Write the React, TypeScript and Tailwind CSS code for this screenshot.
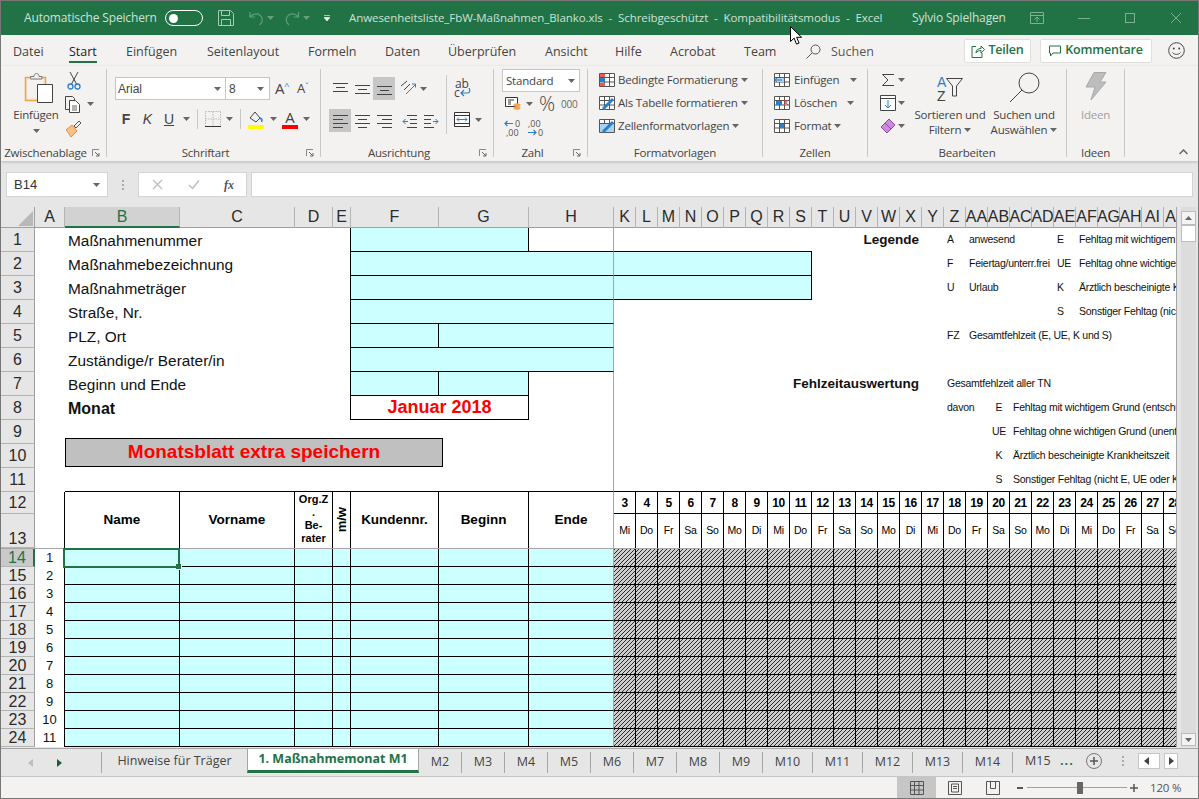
import React from 'react';

const DAYS = ['Mi', 'Do', 'Fr', 'Sa', 'So', 'Mo', 'Di', 'Mi', 'Do', 'Fr', 'Sa', 'So', 'Mo', 'Di', 'Mi', 'Do', 'Fr', 'Sa', 'So', 'Mo', 'Di', 'Mi', 'Do', 'Fr', 'Sa', 'So'];
const DAY_COLS = ['K', 'L', 'M', 'N', 'O', 'P', 'Q', 'R', 'S', 'T', 'U', 'V', 'W', 'X', 'Y', 'Z', 'AA', 'AB', 'AC', 'AD', 'AE', 'AF', 'AG', 'AH', 'AI', 'AJ'];

const LEFT_COLS = [
  { id: 'A', w: 'w-[30px]' },
  { id: 'B', w: 'w-[115px]' },
  { id: 'C', w: 'w-[115px]' },
  { id: 'D', w: 'w-[38px]' },
  { id: 'E', w: 'w-[18px]' },
  { id: 'F', w: 'w-[88px]' },
  { id: 'G', w: 'w-[90px]' },
  { id: 'H', w: 'w-[85px]' },
];

const TABS = [
  { label: 'Datei', w: 'w-[56px]' },
  { label: 'Start', w: 'w-[57px]' },
  { label: 'Einfügen', w: 'w-[81px]' },
  { label: 'Seitenlayout', w: 'w-[101px]' },
  { label: 'Formeln', w: 'w-[77px]' },
  { label: 'Daten', w: 'w-[63px]' },
  { label: 'Überprüfen', w: 'w-[97px]' },
  { label: 'Ansicht', w: 'w-[70px]' },
  { label: 'Hilfe', w: 'w-[55px]' },
  { label: 'Acrobat', w: 'w-[74px]' },
  { label: 'Team', w: 'w-[62px]' },
];

const SHEETS = [
  { label: 'M2', w: 'w-[43px]' },
  { label: 'M3', w: 'w-[43px]' },
  { label: 'M4', w: 'w-[43px]' },
  { label: 'M5', w: 'w-[43px]' },
  { label: 'M6', w: 'w-[43px]' },
  { label: 'M7', w: 'w-[43px]' },
  { label: 'M8', w: 'w-[43px]' },
  { label: 'M9', w: 'w-[43px]' },
  { label: 'M10', w: 'w-[50px]' },
  { label: 'M11', w: 'w-[50px]' },
  { label: 'M12', w: 'w-[50px]' },
  { label: 'M13', w: 'w-[50px]' },
  { label: 'M14', w: 'w-[50px]' },
];

const CELL = 'border-r border-b border-black';
const CYAN = 'bg-[#ccffff]';
const HATCH = 'bg-[repeating-linear-gradient(135deg,#2a2a2a_0_1.1px,#cfcfcf_1.1px_2.83px)]';

function Caret({ className = '' }: { className?: string }) {
  return (
    <svg width="7" height="4" viewBox="0 0 7 4" className={`shrink-0 ${className}`}>
      <path d="M0 0h7L3.5 4z" fill="#666" />
    </svg>
  );
}

function Launcher() {
  return (
    <svg width="8" height="8" viewBox="0 0 8 8" className="shrink-0">
      <path d="M0.5 7V0.5H7" fill="none" stroke="#888" />
      <path d="M3 3l4 4M7 4v3H4" fill="none" stroke="#666" />
    </svg>
  );
}

function Sep() {
  return <div className="w-px h-[88px] mt-[3px] bg-[#c8c8c8] shrink-0" />;
}

function Group({ w, label, launcher, children }: { w: string; label: string; launcher?: boolean; children: React.ReactNode }) {
  return (
    <div className={`${w} shrink-0 h-full flex flex-col`}>
      <div className="h-[79px] flex">{children}</div>
      <div className="h-[16px] flex items-center leading-none text-[#444]">
        <div className="flex-1 text-center whitespace-nowrap">{label}</div>
        {launcher && <div className="w-[16px] pr-[4px] flex justify-center"><Launcher /></div>}
      </div>
    </div>
  );
}

function AlignIcon({ lines }: { lines: string }) {
  return (
    <svg width="15" height="14" viewBox="0 0 15 14">
      <path d={lines} stroke="#444" strokeWidth="1" fill="none" />
    </svg>
  );
}

function TableIcon({ children }: { children: React.ReactNode }) {
  return (
    <svg width="16" height="16" viewBox="0 0 16 16" className="shrink-0">
      <path d="M.5 1.5h15v13H.5zM.5 5.5h15M.5 10h15M5.5 1.5v13M10.5 1.5v13" fill="#fff" stroke="#555" />
      {children}
    </svg>
  );
}

function Row({ n, h = 'h-[24px]', active, bottom, children }: { n: number; h?: string; active?: boolean; bottom?: boolean; children: React.ReactNode }) {
  return (
    <div className={`flex shrink-0 ${h}`}>
      <RowHead n={n} active={active} bottom={bottom} />
      {children}
    </div>
  );
}

function RowHead({ n, active, bottom, h = '' }: { n: number; active?: boolean; bottom?: boolean; h?: string }) {
  return (
    <div className={`w-[34px] shrink-0 flex justify-center text-[16px] leading-[17px] border-b border-b-[#b4b4b4] ${h} ${bottom ? 'items-end' : 'items-center'} ${active ? 'bg-[#c9c9c9] text-[#217346] border-r-2 border-r-[#217346]' : 'bg-[#e6e6e6] text-[#2b2b2b] border-r border-r-[#a0a0a0]'}`}>
      {n}
    </div>
  );
}

function Label({ bold, frame = true, children }: { bold?: boolean; frame?: boolean; children?: React.ReactNode }) {
  return (
    <div className={`w-[316px] shrink-0 pl-[33px] pt-[1px] flex items-center text-[#111] ${bold ? 'font-bold text-[16px]' : 'text-[15.4px]'} ${frame ? 'border-r border-black' : ''}`}>
      {children}
    </div>
  );
}

function Legend({ box, title, code, text, code2, text2 }: { box?: 'top' | 'fill'; title?: string; code?: string; text?: string; code2?: string; text2?: string }) {
  return (
    <div className="flex-1 min-w-0 flex text-[10.5px] tracking-[-0.25px] text-[#111] whitespace-nowrap overflow-hidden">
      {box === 'top' && <div className="w-[198px] shrink-0 border-b border-black" />}
      {box === 'fill' && <div className={`w-[198px] shrink-0 ${CYAN} ${CELL}`} />}
      <div className={`${box ? 'w-[132px]' : 'w-[330px]'} shrink-0 pr-[25px] flex items-center justify-end font-bold text-[13.5px] tracking-normal`}>{title}</div>
      <div className="w-[22px] shrink-0 pl-[3px] flex items-center">{code}</div>
      <div className="w-[88px] shrink-0 pl-[3px] flex items-center">{text}</div>
      <div className="w-[22px] shrink-0 pl-[3px] flex items-center">{code2}</div>
      <div className="shrink-0 pl-[3px] flex items-center">{text2}</div>
    </div>
  );
}

function Absence({ title, first, code, text, line }: { title?: string; first?: string; code?: string; text?: string; line?: boolean }) {
  return (
    <div className={`flex-1 min-w-0 flex text-[10.5px] tracking-[-0.25px] text-[#111] whitespace-nowrap overflow-hidden ${line ? 'border-b border-black' : ''}`}>
      <div className="w-[330px] shrink-0 pr-[25px] flex items-center justify-end font-bold text-[13.5px] tracking-normal">{title}</div>
      <div className="w-[44px] shrink-0 pl-[3px] flex items-center">{first}</div>
      <div className="w-[22px] shrink-0 flex items-center justify-center">{code}</div>
      <div className="shrink-0 pl-[3px] flex items-center">{text}</div>
    </div>
  );
}

function TitleBar() {
  return (
    <div className="h-[34px] shrink-0 bg-[#217346] flex items-center text-[12px] text-[#cfe0d6] whitespace-nowrap relative">
      <div className="ml-[23px] w-[133px] shrink-0 tracking-[-0.15px]">Automatische Speichern</div>
      <div className="ml-[8px] w-[38px] h-[16px] rounded-full border border-white shrink-0 flex items-center pl-[3px]">
        <div className="w-[9px] h-[9px] rounded-full bg-white" />
      </div>
      <svg width="16" height="16" viewBox="0 0 16 16" className="ml-[15px] shrink-0">
        <path d="M.5.5h12l3 3v12H.5zM3.5.5v5h8v-5M3.5 15.5v-6h9v6" fill="none" stroke="#a9cbb8" />
      </svg>
      <svg width="16" height="16" viewBox="0 0 16 16" className="ml-[14px] shrink-0">
        <path d="M2 2v5h5M2.5 6.5C6 3 11 3 13.5 7c1.5 3 .5 6-2 8" fill="none" stroke="#5d9c7b" strokeWidth="1.2" />
      </svg>
      <Caret className="ml-[3px] opacity-50 [&>path]:fill-[#a9cbb8]" />
      <svg width="17" height="16" viewBox="0 0 16 16" className="ml-[10px] shrink-0">
        <path d="M14 2v5H9M13.5 6.5C10 3 5 3 2.5 7c-1.5 3-.5 6 2 8" fill="none" stroke="#5d9c7b" strokeWidth="1.2" />
      </svg>
      <Caret className="ml-[2px] opacity-50 [&>path]:fill-[#a9cbb8]" />
      <svg width="6" height="6" viewBox="0 0 6 6" className="ml-[14px] shrink-0">
        <path d="M0 .5h6M0 2.5h6L3 6z" fill="#fff" stroke="#fff" strokeWidth=".6" />
      </svg>
      <div className="ml-[19px] w-[537px] shrink-0 text-[11.5px] tracking-[-0.07px]">Anwesenheitsliste_FbW-Maßnahmen_Blanko.xls{'\u00a0\u00a0-\u00a0\u00a0'}Schreibgeschützt{'\u00a0\u00a0-\u00a0\u00a0'}Kompatibilitätsmodus{'\u00a0\u00a0-\u00a0\u00a0'}Excel</div>
      <div className="ml-[26px] w-[93px] shrink-0 tracking-[-0.15px]">Sylvio Spielhagen</div>
      <svg width="14" height="12" viewBox="0 0 14 12" className="ml-[25px] shrink-0">
        <path d="M.5.5h13v11H.5zM.5 3.5h13M4.5 7.5L7 5l2.5 2.5M7 5v5" fill="none" stroke="#7fb097" />
      </svg>
      <div className="ml-[34px] w-[12px] h-px bg-[#7fb097] shrink-0" />
      <div className="ml-[35px] w-[10px] h-[10px] border border-[#7fb097] shrink-0" />
      <svg width="10" height="10" viewBox="0 0 10 10" className="ml-[36px] shrink-0">
        <path d="M0 0l10 10M10 0L0 10" stroke="#7fb097" />
      </svg>
      <svg width="12" height="19" viewBox="0 0 12 19" className="absolute left-[789px] top-[25px]">
        <path d="M.5.5v15l3.6-3.4 2.4 6 2.6-1-2.5-5.8h5z" fill="#fff" stroke="#000" />
      </svg>
    </div>
  );
}

function TabRow() {
  return (
    <div className="h-[31px] shrink-0 bg-[#f3f2f1] flex items-center pl-[12px] text-[12.5px] text-[#444] whitespace-nowrap">
      {TABS.map(t => (
        <div key={t.label} className={`${t.w} shrink-0 pt-[3px]`}>
          <span className={t.label === 'Start' ? 'text-[#222] border-b-[2px] border-[#217346] pb-[1px]' : ''}>{t.label}</span>
        </div>
      ))}
      <svg width="15" height="15" viewBox="0 0 15 15" className="shrink-0 mt-[2px]">
        <circle cx="9.5" cy="5.5" r="4.5" fill="none" stroke="#555" />
        <path d="M6 9l-5.5 5.5" stroke="#555" />
      </svg>
      <div className="ml-[10px] pt-[3px] text-[#555]">Suchen</div>
      <div className="flex-1" />
      <div className="w-[67px] h-[24px] bg-white border border-[#e1dfdd] rounded-[2px] flex items-center justify-center gap-[3px] text-[#217346] font-semibold tracking-[-0.2px] shrink-0">
        <svg width="14" height="14" viewBox="0 0 14 14">
          <path d="M5 2.5H1v11h10V9M5 9c0-3 2-4.500 5-4.500V2l3.500 3.500L10 9V6.500C8 6.500 6 7 5 9z" fill="none" stroke="#217346" />
        </svg>
        Teilen
      </div>
      <div className="ml-[9px] w-[112px] h-[24px] bg-white border border-[#e1dfdd] rounded-[2px] flex items-center justify-center gap-[4px] text-[#217346] font-semibold tracking-[-0.2px] shrink-0">
        <svg width="12" height="12" viewBox="0 0 12 12">
          <path d="M.5 1h11v7H4L1.500 11V8H.5z" fill="none" stroke="#217346" />
        </svg>
        Kommentare
      </div>
      <svg width="17" height="17" viewBox="0 0 17 17" className="ml-[16px] mr-[13px] shrink-0">
        <circle cx="8.5" cy="8.500" r="7.800" fill="none" stroke="#444" />
        <circle cx="5.800" cy="6.500" r="1" fill="#444" />
        <circle cx="11.200" cy="6.500" r="1" fill="#444" />
        <path d="M4.500 10.500c2 2.500 6 2.500 8 0" fill="none" stroke="#444" />
      </svg>
    </div>
  );
}

function Ribbon() {
  return (
    <div className="h-[95px] shrink-0 bg-[#f3f2f1] flex text-[11.5px] tracking-[-0.2px] text-[#444] whitespace-nowrap shadow-[0_1px_3px_rgba(0,0,0,0.2)] relative">
      <Group w="w-[105px]" label="Zwischenablage" launcher>
        <div className="ml-[10px] w-[50px] flex flex-col items-center pt-[6px]">
          <svg width="30" height="31" viewBox="0 0 30 31" className="ml-[6px] shrink-0">
            <path d="M1.500 5.500h20v23h-20z" fill="#f8e6c8" stroke="#eda24c" strokeWidth="1.500" />
            <path d="M3.500 7.500h16v19h-16z" fill="#f3f2f1" />
            <path d="M6.500 6.500v-2h3.500c0-4 5-4 5 0h3v2.500h-11.500z" fill="#f3f2f1" stroke="#777" />
            <path d="M13.500 12.500h15v18h-15z" fill="#fff" stroke="#444" />
          </svg>
          <div className="mt-[4px] h-[16px] leading-[16px]">Einfügen</div>
          <Caret className="mt-[6px]" />
        </div>
        <div className="ml-[4px] flex flex-col pt-[6px]">
          <div className="h-[24px]">
            <svg width="14" height="18" viewBox="0 0 14 18" className="ml-[2px]">
              <path d="M3 0l6.500 12M11 0L4.500 12" stroke="#444" fill="none" />
              <circle cx="3.500" cy="14.500" r="2.500" fill="none" stroke="#2a7fc9" strokeWidth="1.300" />
              <circle cx="10.500" cy="14.500" r="2.500" fill="none" stroke="#2a7fc9" strokeWidth="1.300" />
            </svg>
          </div>
          <div className="h-[24px] flex items-start">
            <svg width="15" height="17" viewBox="0 0 15 17">
              <path d="M.5.5h7l2 2v11H.5z" fill="#f3f2f1" stroke="#444" />
              <path d="M4.500 4.500h6l4 4v8h-10z" fill="#fff" stroke="#444" />
              <path d="M7 10h5M7 12h5M7 14h5" stroke="#666" />
            </svg>
            <Caret className="ml-[7px] mt-[6px]" />
          </div>
          <div className="h-[24px]">
            <svg width="17" height="18" viewBox="0 0 17 18">
              <path d="M1 10l6-5 5 6-6 6c-2-3-3-5-5-7z" fill="#f6c28a" stroke="#ea8a2e" />
              <path d="M9 6l5-5 2 2-5 5z" fill="none" stroke="#555" />
            </svg>
          </div>
        </div>
      </Group>
      <Sep />
      <Group w="w-[213px]" label="Schriftart" launcher>
        <div className="flex flex-col pl-[8px] pt-[11px]">
          <div className="flex items-center h-[23px]">
            <div className="w-[111px] h-[23px] bg-white border border-[#c6c6c6] flex items-center justify-between pl-[2px] pr-[4px] font-['Liberation_Sans',sans-serif] text-[12px] tracking-normal">
              Arial<Caret />
            </div>
            <div className="w-[44px] h-[23px] bg-white border border-[#c6c6c6] border-l-0 flex items-center justify-between pl-[3px] pr-[5px] font-['Liberation_Sans',sans-serif] text-[12px] tracking-normal">
              8<Caret />
            </div>
            <div className="ml-[5px] w-[19px] text-[15px] leading-none">A<span className="text-[#2a7fc9] text-[9px] align-top">^</span></div>
            <div className="ml-[3px] w-[16px] text-[13px] leading-none">A<span className="text-[#2a7fc9] text-[9px] align-top">ˇ</span></div>
          </div>
          <div className="mt-[8px] flex items-center h-[22px] font-['Liberation_Sans',sans-serif] tracking-normal">
            <div className="w-[22px] text-center font-bold text-[14px]">F</div>
            <div className="w-[21px] text-center italic text-[14px]">K</div>
            <div className="w-[22px] text-center text-[14px] underline">U</div>
            <div className="w-[12px] flex justify-center"><Caret /></div>
            <div className="ml-[5px] w-px h-[20px] bg-[#c8c8c8]" />
            <svg width="16" height="16" viewBox="0 0 16 16" className="ml-[7px]">
              <path d="M.5.5h15v15M.5 15.500V.5M8 .5v14M.5 8h15" fill="none" stroke="#bbb" strokeDasharray="1.500 1" />
              <path d="M0 15.500h16" stroke="#333" />
            </svg>
            <div className="w-[16px] flex justify-center"><Caret /></div>
            <div className="ml-[3px] w-px h-[20px] bg-[#c8c8c8]" />
            <svg width="16" height="19" viewBox="0 0 16 19" className="ml-[7px]">
              <path d="M2 8l5-6 5 6-4 4z" fill="none" stroke="#444" />
              <path d="M12 8c2 1 2 3 1.500 4" stroke="#2a7fc9" strokeWidth="1.500" fill="none" />
              <rect x="0" y="15" width="16" height="4" fill="#ffff00" />
            </svg>
            <div className="w-[18px] flex justify-center"><Caret /></div>
            <div className="w-[16px] flex flex-col items-center">
              <span className="text-[15px] leading-[15px] font-['Open_Sans',sans-serif]">A</span>
              <div className="w-[16px] h-[4px] bg-[#ff0000]" />
            </div>
            <div className="w-[16px] flex justify-center"><Caret /></div>
          </div>
        </div>
      </Group>
      <Sep />
      <Group w="w-[172px]" label="Ausrichtung" launcher>
        <div className="w-[125px] shrink-0 pl-[8px] pt-[11px] flex flex-col">
          <div className="flex items-center h-[23px]">
            <div className="w-[22px] flex justify-center"><AlignIcon lines="M0 1.500h15M3 5.500h9M0 9.500h15" /></div>
            <div className="w-[22px] flex justify-center"><AlignIcon lines="M0 3.500h15M3 7.500h9M0 11.500h15" /></div>
            <div className="w-[22px] h-[23px] bg-[#c6c6c6] flex justify-center items-center"><AlignIcon lines="M0 4.500h15M3 8.500h9M0 12.500h15" /></div>
            <svg width="17" height="17" viewBox="0 0 17 17" className="ml-[5px]">
              <path d="M1 6l6-5M4 10l6-6" stroke="#444" fill="none" />
              <path d="M6 14l9-9M12 4h3.500v3.500" stroke="#2a7fc9" fill="none" />
            </svg>
            <Caret className="ml-[3px]" />
          </div>
          <div className="mt-[9px] flex items-center h-[23px]">
            <div className="w-[22px] h-[23px] bg-[#c6c6c6] flex justify-center items-center"><AlignIcon lines="M0 1.500h15M0 5.500h10M0 9.500h15M0 13.500h10" /></div>
            <div className="w-[22px] flex justify-center"><AlignIcon lines="M0 1.500h15M3 5.500h9M0 9.500h15M3 13.500h9" /></div>
            <div className="w-[22px] flex justify-center"><AlignIcon lines="M0 1.500h15M5 5.500h10M0 9.500h15M5 13.500h10" /></div>
            <svg width="15" height="14" viewBox="0 0 15 14" className="ml-[7px]">
              <path d="M5 1.500h10M8 5.500h7M8 9.500h7M5 13.500h10" stroke="#444" />
              <path d="M6 7.500H1M3.500 5L1 7.500 3.500 10" stroke="#2a7fc9" fill="none" />
            </svg>
            <svg width="15" height="14" viewBox="0 0 15 14" className="ml-[7px]">
              <path d="M0 1.500h10M0 5.500h7M0 9.500h7M0 13.500h10" stroke="#444" />
              <path d="M9 7.500h5M11.500 5L14 7.500 11.500 10" stroke="#2a7fc9" fill="none" />
            </svg>
          </div>
        </div>
        <div className="w-px h-[59px] mt-[9px] bg-[#c8c8c8] shrink-0" />
        <div className="pl-[7px] flex flex-col">
          <div className="mt-[13px] h-[24px] w-[20px] flex flex-col text-[12px] leading-[9px]">
            <span className="ml-[1px]">ab</span>
            <div className="flex items-center">
              <span>c</span>
              <svg width="11" height="9" viewBox="0 0 11 9">
                <path d="M9 0c2 4 0 5-2 5H1M4 2L1 5l3 3" fill="none" stroke="#2a7fc9" strokeWidth="1.200" />
              </svg>
            </div>
          </div>
          <div className="mt-[9px] flex items-center">
            <svg width="16" height="15" viewBox="0 0 16 15">
              <path d="M.5.5h15v14H.5zM.5 3.500h15M.5 11.500h15" fill="#fff" stroke="#333" />
              <path d="M3 7.500h10M5 5.500l-2 2 2 2M11 5.500l2 2-2 2" fill="none" stroke="#2a7fc9" />
            </svg>
            <Caret className="ml-[5px]" />
          </div>
        </div>
      </Group>
      <Sep />
      <Group w="w-[93px]" label="Zahl" launcher>
        <div className="pl-[8px] pt-[3px] flex flex-col">
          <div className="w-[78px] h-[23px] bg-white border border-[#c6c6c6] flex items-center justify-between pl-[3px] pr-[4px]">Standard<Caret /></div>
          <div className="h-[24px] flex items-center">
            <svg width="16" height="14" viewBox="0 0 16 14" className="ml-[3px]">
              <path d="M.5.5h12v9H.5z" fill="#fff" stroke="#333" />
              <path d="M3 3h6M3 5h3M3 7h3" stroke="#333" />
              <ellipse cx="12" cy="8" rx="3.500" ry="1.800" fill="#f5a54a" />
              <ellipse cx="12" cy="11" rx="3.500" ry="1.800" fill="#f5a54a" />
            </svg>
            <div className="w-[16px] flex justify-center"><Caret /></div>
            <div className="ml-[2px] w-[16px] text-[20px] font-light leading-none text-center tracking-normal">%</div>
            <div className="ml-[6px] text-[10px] text-[#666]">000</div>
          </div>
          <div className="h-[23px] flex flex-col justify-center">
            <div className="flex text-[9px] leading-[9px] text-[#555] tracking-normal">
              <div className="ml-[2px] w-[18px] flex items-center">
                <svg width="9" height="7" viewBox="0 0 9 7"><path d="M9 3.500H1M3.500 1L1 3.500 3.500 6" fill="none" stroke="#2a7fc9" strokeWidth="1.200" /></svg>
                <span className="ml-[2px]">0</span>
              </div>
              <div className="ml-[6px]">,00</div>
            </div>
            <div className="flex text-[9px] leading-[9px] text-[#555] tracking-normal">
              <div className="ml-[4px] w-[16px]">,00</div>
              <div className="ml-[6px] flex items-center">
                <svg width="9" height="7" viewBox="0 0 9 7"><path d="M0 3.500h8M5.500 1L8 3.500 5.500 6" fill="none" stroke="#2a7fc9" strokeWidth="1.200" /></svg>
                <span className="ml-[1px]">0</span>
              </div>
            </div>
          </div>
        </div>
      </Group>
      <Sep />
      <Group w="w-[174px]" label="Formatvorlagen">
        <div className="pl-[11px] pt-[2px] flex flex-col">
          <div className="h-[23px] flex items-center">
            <TableIcon><rect x="1" y="6" width="5" height="4" fill="#2a7fc9" /><rect x="1" y="2" width="5" height="3" fill="#ea5a5a" /><rect x="1" y="11" width="5" height="3" fill="#ea5a5a" /></TableIcon>
            <span className="ml-[3px]">Bedingte Formatierung</span><Caret className="ml-[3px]" />
          </div>
          <div className="h-[23px] flex items-center">
            <TableIcon><path d="M4 14L14 4" stroke="#2a7fc9" strokeWidth="3" /></TableIcon>
            <span className="ml-[3px]">Als Tabelle formatieren</span><Caret className="ml-[3px]" />
          </div>
          <div className="h-[23px] flex items-center">
            <TableIcon><rect x="1" y="6" width="14" height="8" fill="#a9d3f2" /><path d="M4 14L14 4" stroke="#2a7fc9" strokeWidth="3" /></TableIcon>
            <span className="ml-[3px]">Zellenformatvorlagen</span><Caret className="ml-[3px]" />
          </div>
        </div>
      </Group>
      <Sep />
      <Group w="w-[104px]" label="Zellen">
        <div className="pl-[11px] pt-[2px] flex flex-col">
          <div className="h-[23px] flex items-center">
            <TableIcon><rect x="1" y="6" width="9" height="4" fill="#a9d3f2" /><path d="M8 8H1M3 6L1 8l2 2" stroke="#2a7fc9" fill="none" /></TableIcon>
            <span className="ml-[4px] w-[56px]">Einfügen</span><Caret />
          </div>
          <div className="h-[23px] flex items-center">
            <TableIcon><rect x="2" y="6" width="6" height="4" fill="#2a7fc9" /><path d="M10 5l4 5M14 5l-4 5" stroke="#e03a3a" /></TableIcon>
            <span className="ml-[4px] w-[53px]">Löschen</span><Caret />
          </div>
          <div className="h-[23px] flex items-center">
            <TableIcon><rect x="6" y="6" width="4" height="4" fill="#2a7fc9" /></TableIcon>
            <span className="ml-[4px] w-[40px]">Format</span><Caret />
          </div>
        </div>
      </Group>
      <Sep />
      <Group w="w-[198px]" label="Bearbeiten">
        <div className="ml-[12px] w-[33px] shrink-0 pt-[2px] flex flex-col">
          <div className="h-[23px] flex items-center">
            <svg width="14" height="14" viewBox="0 0 14 14" className="ml-[1px]"><path d="M13 1.500H1.500L7 7l-5.500 5.500H13" fill="none" stroke="#444" /></svg>
            <Caret className="ml-[3px]" />
          </div>
          <div className="h-[23px] flex items-center">
            <svg width="16" height="16" viewBox="0 0 16 16"><path d="M.5.5h15v15H.5zM.5 3.500h15" fill="#fff" stroke="#444" /><path d="M8 5v8M5 10l3 3 3-3" stroke="#2a7fc9" fill="none" /></svg>
            <Caret className="ml-[2px]" />
          </div>
          <div className="h-[23px] flex items-center">
            <svg width="16" height="16" viewBox="0 0 16 16"><path d="M1 9l8-8 6 6-8 8z" fill="#c88ed8" stroke="#9a3fb5" /><path d="M5 5l6 6" stroke="#9a3fb5" /></svg>
            <Caret className="ml-[2px]" />
          </div>
        </div>
        <div className="w-[74px] shrink-0 flex flex-col items-center pt-[6px]">
          <div className="h-[31px] flex items-end">
            <div className="flex flex-col text-[14px] leading-[14px] font-['Liberation_Sans',sans-serif]">
              <span className="text-[#2a7fc9]">A</span>
              <span>Z</span>
            </div>
            <svg width="17" height="19" viewBox="0 0 17 19" className="mb-[6px]"><path d="M.5.500h16L10.500 8v10h-4V8z" fill="none" stroke="#444" /></svg>
          </div>
          <div className="mt-[4px] h-[15px] leading-[15px]">Sortieren und</div>
          <div className="h-[15px] leading-[15px] flex items-center">Filtern<Caret className="ml-[3px]" /></div>
        </div>
        <div className="ml-[1px] w-[72px] shrink-0 flex flex-col items-center pt-[6px]">
          <svg width="31" height="31" viewBox="0 0 31 31" className="shrink-0">
            <circle cx="20" cy="11" r="10" fill="none" stroke="#444" />
            <path d="M13 18L1 30" stroke="#444" />
          </svg>
          <div className="mt-[4px] h-[15px] leading-[15px]">Suchen und</div>
          <div className="h-[15px] leading-[15px] flex items-center">Auswählen<Caret className="ml-[3px]" /></div>
        </div>
      </Group>
      <Sep />
      <Group w="w-[57px]" label="Ideen">
        <div className="w-full flex flex-col items-center pt-[6px]">
          <svg width="22" height="28" viewBox="0 0 22 28" className="shrink-0">
            <path d="M9 .5h12L15 10h6L6 28l4-13H1z" fill="#bdbdbd" stroke="#a8a8a8" />
          </svg>
          <div className="mt-[7px] h-[16px] leading-[16px] text-[#a0a0a0]">Ideen</div>
        </div>
      </Group>
      <Sep />
      <div className="flex-1 flex items-end justify-end pb-[6px] pr-[10px]">
        <svg width="9" height="6" viewBox="0 0 9 6"><path d="M.5 5l4-4 4 4" fill="none" stroke="#666" strokeWidth="1.500" /></svg>
      </div>
    </div>
  );
}

function FormulaBar() {
  return (
    <div className="h-[25px] shrink-0 flex items-stretch font-['Liberation_Sans',sans-serif]">
      <div className="ml-[5px] w-[102px] bg-white border border-[#d4d4d4] flex items-center justify-between pl-[7px] pr-[7px] text-[13px] text-[#333]">
        B14
        <Caret />
      </div>
      <div className="w-[30px] flex flex-col items-center justify-center gap-[2px]">
        <div className="w-[2px] h-[2px] bg-[#aaa]" />
        <div className="w-[2px] h-[2px] bg-[#aaa]" />
        <div className="w-[2px] h-[2px] bg-[#aaa]" />
      </div>
      <div className="w-[109px] bg-white border border-[#d4d4d4] flex items-center">
        <svg width="11" height="11" viewBox="0 0 11 11" className="ml-[13px]"><path d="M1 1l9 9M10 1l-9 9" stroke="#bdbdbd" strokeWidth="1.300" /></svg>
        <svg width="12" height="11" viewBox="0 0 12 11" className="ml-[25px]"><path d="M1 6l3.500 3.500L11 1.500" stroke="#bdbdbd" strokeWidth="1.500" fill="none" /></svg>
        <span className="ml-[24px] italic font-bold text-[12px] text-[#555] font-['Liberation_Serif',serif]">fx</span>
      </div>
      <div className="ml-[4px] w-[942px] bg-white border border-[#d4d4d4]" />
    </div>
  );
}

function ColHead({ id, w, active }: { id: string; w: string; active?: boolean }) {
  return (
    <div className={`${w} shrink-0 flex items-center justify-center text-[16px] leading-none border-r border-r-[#b4b4b4] ${active ? 'bg-[#d2d2d2] text-[#217346] border-b-2 border-b-[#217346]' : 'text-[#2b2b2b] border-b border-b-[#9f9f9f]'}`}>
      {id}
    </div>
  );
}

function Sheet() {
  const names = [1, 2, 3, 4, 5, 6, 7, 8, 9, 10, 11];
  return (
    <div className="w-[1176px] h-full shrink-0 flex flex-col overflow-hidden border-r border-[#a6a6a6] bg-white font-['Liberation_Sans',sans-serif] relative">
      <div className="flex h-[21px] shrink-0 bg-[#e6e6e6]">
        <div className="w-[34px] shrink-0 border-r border-b border-[#a0a0a0] flex items-end justify-end pr-[1px] pb-[1px]">
          <svg width="15" height="15" viewBox="0 0 15 15"><path d="M15 0v15H0z" fill="#b8b8b8" /></svg>
        </div>
        {LEFT_COLS.map(c => <ColHead key={c.id} id={c.id} w={c.w} active={c.id === 'B'} />)}
        {DAY_COLS.map(c => <ColHead key={c} id={c} w="w-[22px]" />)}
      </div>

      <Row n={1}>
        <Label>Maßnahmenummer</Label>
        <div className={`w-[178px] shrink-0 ${CYAN} ${CELL}`} />
        <div className="w-[85px] shrink-0 border-b border-b-black border-r border-r-[#a6a6a6]" />
        <Legend box="top" title="Legende" code="A" text="anwesend" code2="E" text2="Fehltag mit wichtigem Grund" />
      </Row>
      <Row n={2}>
        <Label>Maßnahmebezeichnung</Label>
        <div className={`w-[263px] shrink-0 ${CYAN} border-b border-b-black border-r border-r-[#a6a6a6]`} />
        <Legend box="fill" code="F" text="Feiertag/unterr.frei" code2="UE" text2="Fehltag ohne wichtigen Grund" />
      </Row>
      <Row n={3}>
        <Label>Maßnahmeträger</Label>
        <div className={`w-[263px] shrink-0 ${CYAN} border-b border-b-black border-r border-r-[#a6a6a6]`} />
        <Legend box="fill" code="U" text="Urlaub" code2="K" text2="Ärztlich bescheinigte Krankheitszeit" />
      </Row>
      <Row n={4}>
        <Label>Straße, Nr.</Label>
        <div className={`w-[263px] shrink-0 ${CYAN} border-b border-b-black border-r border-r-[#a6a6a6]`} />
        <Legend code2="S" text2="Sonstiger Fehltag (nicht E, UE oder K)" />
      </Row>
      <Row n={5}>
        <Label>PLZ, Ort</Label>
        <div className={`w-[88px] shrink-0 ${CYAN} ${CELL}`} />
        <div className={`w-[175px] shrink-0 ${CYAN} border-b border-b-black border-r border-r-[#a6a6a6]`} />
        <Legend code="FZ" text="Gesamtfehlzeit (E, UE, K und S)" />
      </Row>
      <Row n={6}>
        <Label>Zuständige/r Berater/in</Label>
        <div className={`w-[263px] shrink-0 ${CYAN} border-b border-b-black border-r border-r-[#a6a6a6]`} />
        <Legend />
      </Row>
      <Row n={7}>
        <Label>Beginn und Ende</Label>
        <div className={`w-[88px] shrink-0 ${CYAN} ${CELL}`} />
        <div className={`w-[90px] shrink-0 ${CYAN} ${CELL}`} />
        <div className="w-[85px] shrink-0 border-r border-[#a6a6a6]" />
        <Absence title="Fehlzeitauswertung" first="Gesamtfehlzeit aller TN" />
      </Row>
      <Row n={8}>
        <Label bold>Monat</Label>
        <div className={`w-[178px] shrink-0 ${CELL} flex items-center justify-center text-[18px] font-bold text-[#ff0000]`}>Januar 2018</div>
        <div className="w-[85px] shrink-0 border-r border-[#a6a6a6]" />
        <Absence first="davon" code="E" text="Fehltag mit wichtigem Grund (entschuldigt)" />
      </Row>
      <Row n={9}>
        <Label frame={false} />
        <div className="w-[263px] shrink-0 border-r border-[#a6a6a6]" />
        <Absence code="UE" text="Fehltag ohne wichtigen Grund (unentschuldigt)" />
      </Row>
      <Row n={10}>
        <Label frame={false} />
        <div className="w-[263px] shrink-0 border-r border-[#a6a6a6]" />
        <Absence code="K" text="Ärztlich bescheinigte Krankheitszeit" />
      </Row>
      <Row n={11}>
        <div className="w-[30px] shrink-0" />
        <div className="w-[286px] shrink-0 border-b border-black" />
        <div className="w-[263px] shrink-0 border-b border-b-black border-r border-r-[#a6a6a6]" />
        <Absence code="S" text="Sonstiger Fehltag (nicht E, UE oder K)" line />
      </Row>

      <div className="flex h-[57px] shrink-0 border-b border-[#a6a6a6]">
        <div className="w-[34px] shrink-0 flex flex-col">
          <RowHead n={12} h="h-[22px]" />
          <RowHead n={13} h="h-[34px]" bottom />
        </div>
        <div className="w-[30px] shrink-0 border-r border-black" />
        <div className="w-[115px] shrink-0 border-r border-black flex items-center justify-center font-bold text-[13.5px]">Name</div>
        <div className="w-[115px] shrink-0 border-r border-black flex items-center justify-center font-bold text-[13.5px]">Vorname</div>
        <div className="w-[38px] shrink-0 border-r border-black text-center font-bold text-[11px] leading-[13px] pt-[1px]">Org.Z<br />.<br />Be-<br />rater</div>
        <div className="w-[18px] shrink-0 border-r border-black flex items-center justify-center">
          <span className="[writing-mode:vertical-rl] rotate-180 font-bold text-[13px] leading-none">m/w</span>
        </div>
        <div className="w-[88px] shrink-0 border-r border-black flex items-center justify-center font-bold text-[13.5px]">Kundennr.</div>
        <div className="w-[90px] shrink-0 border-r border-black flex items-center justify-center font-bold text-[13.5px]">Beginn</div>
        <div className="w-[85px] shrink-0 border-r border-[#a6a6a6] flex items-center justify-center font-bold text-[13.5px]">Ende</div>
        <div className="flex flex-col min-w-0">
          <div className="flex h-[22px] shrink-0 border-b border-black">
            {DAYS.map((_, i) => (
              <div key={i} className="w-[22px] shrink-0 border-r border-black flex items-center justify-center font-bold text-[12px] tracking-[-0.5px]">{i + 3}</div>
            ))}
          </div>
          <div className="flex flex-1">
            {DAYS.map((d, i) => (
              <div key={i} className="w-[22px] shrink-0 border-r border-black flex items-center justify-center text-[10.5px] tracking-[-0.25px]">{d}</div>
            ))}
          </div>
        </div>
      </div>

      {names.map(n => (
        <Row key={n} n={n + 13} h="h-[18px]" active={n === 1}>
          <div className="w-[30px] shrink-0 border-r border-black flex items-center justify-center text-[13px] text-[#111]">{n}</div>
          {LEFT_COLS.slice(1, 7).map(c => (
            <div key={c.id} className={`${c.w} shrink-0 ${CYAN} ${CELL} relative`}>
              {n === 1 && c.id === 'B' && (
                <div className="absolute -left-[2px] -top-[1px] w-[117px] h-[20px] border-2 border-[#217346] z-10">
                  <div className="absolute -right-[4px] -bottom-[4px] w-[6px] h-[6px] bg-[#217346] border border-white border-t-0 border-l-0" />
                </div>
              )}
            </div>
          ))}
          <div className={`w-[85px] shrink-0 ${CYAN} border-b border-b-black border-r border-r-[#a6a6a6]`} />
          <div className={`flex shrink-0 ${HATCH}`}>
            {DAYS.map((_, i) => <div key={i} className={`w-[22px] shrink-0 ${CELL}`} />)}
          </div>
        </Row>
      ))}

      <div className="absolute left-[64px] top-[231px] w-[378px] h-[29px] bg-[#c0c0c0] border border-black flex items-center justify-center text-[19px] font-bold text-[#ff0000]">
        Monatsblatt extra speichern
      </div>
    </div>
  );
}

function ScrollBar() {
  return (
    <div className="ml-[4px] w-[15px] h-full shrink-0 bg-[#dcdcdc] flex flex-col items-center pt-[4px] pb-[1px]">
      <div className="w-[15px] h-[14px] bg-[#f3f3f3] border border-[#bdbdbd] flex items-center justify-center">
        <svg width="7" height="4" viewBox="0 0 7 4"><path d="M3.500 0L7 4H0z" fill="#666" /></svg>
      </div>
      <div className="w-[15px] h-[17px] bg-white border border-[#bdbdbd]" />
      <div className="flex-1" />
      <div className="w-[15px] h-[13px] bg-[#f3f3f3] border border-[#bdbdbd] flex items-center justify-center">
        <Caret />
      </div>
    </div>
  );
}

function SheetTabs() {
  return (
    <div className="h-[29px] shrink-0 pt-px bg-[#e6e6e6]">
      <div className="h-full border-t border-[#a6a6a6] flex text-[12.5px] text-[#444] whitespace-nowrap">
        <div className="w-[101px] shrink-0 flex items-center mb-[3px] mt-[3px] border-r border-[#a6a6a6]">
          <svg width="5" height="8" viewBox="0 0 5 8" className="ml-[27px]"><path d="M5 0v8L0 4z" fill="#bdbdbd" /></svg>
          <svg width="5" height="8" viewBox="0 0 5 8" className="ml-[24px]"><path d="M0 0v8l5-4z" fill="#1c5f3a" /></svg>
        </div>
        <div className="w-[145px] shrink-0 flex items-center justify-center pb-[3px]">Hinweise für Träger</div>
        <div className="w-[172px] h-[25px] -mt-px shrink-0 bg-white border-x border-t border-x-[#a6a6a6] border-t-[#a6a6a6] border-b-[3px] border-b-[#217346] flex items-center justify-center font-bold text-[#217346]">1. Maßnahmemonat M1</div>
        {SHEETS.map(s => (
          <div key={s.label} className={`${s.w} shrink-0 my-[3px] border-r border-[#a6a6a6] flex items-center justify-center pb-[1px]`}>{s.label}</div>
        ))}
        <div className="ml-[12px] w-[25px] shrink-0 flex items-center pb-[3px]">M15</div>
        <div className="ml-[10px] w-[12px] shrink-0 flex items-center font-bold text-[#217346] pb-[3px] tracking-[1px]">...</div>
        <svg width="16" height="16" viewBox="0 0 16 16" className="ml-[14px] mt-[4px] shrink-0">
          <circle cx="8" cy="8" r="7.500" fill="none" stroke="#777" />
          <path d="M8 4v8M4 8h8" stroke="#555" strokeWidth="1.500" />
        </svg>
        <div className="ml-[20px] mt-[7px] w-[2px] flex flex-col gap-[2px] shrink-0">
          <div className="w-[2px] h-[2px] bg-[#aaa]" />
          <div className="w-[2px] h-[2px] bg-[#aaa]" />
          <div className="w-[2px] h-[2px] bg-[#aaa]" />
        </div>
        <div className="ml-[14px] mt-[4px] w-[22px] h-[16px] bg-white border border-[#c6c6c6] flex items-center pl-[5px] shrink-0">
          <svg width="5" height="8" viewBox="0 0 5 8"><path d="M5 0v8L0 4z" fill="#444" /></svg>
        </div>
        <div className="ml-[4px] mt-[4px] w-[14px] h-[16px] bg-white border border-[#c6c6c6] flex items-center justify-center shrink-0">
          <svg width="5" height="8" viewBox="0 0 5 8"><path d="M0 0v8l5-4z" fill="#444" /></svg>
        </div>
      </div>
    </div>
  );
}

function StatusBar() {
  return (
    <div className="h-[22px] shrink-0 bg-[#f3f2f1] border-t border-[#c6c6c6] flex items-stretch text-[11.5px] text-[#555] whitespace-nowrap">
      <div className="flex-1" />
      <div className="w-[39px] bg-[#c6c6c6] flex items-center justify-center">
        <svg width="14" height="14" viewBox="0 0 14 14"><path d="M.5.5h13v13H.5zM.5 4.500h13M.5 9h13M4.500.5v13M9 .5v13" fill="none" stroke="#555" /></svg>
      </div>
      <div className="w-[38px] flex items-center justify-center">
        <svg width="14" height="14" viewBox="0 0 14 14"><path d="M.5.5h13v13H.5z" fill="none" stroke="#555" /><path d="M3.500 3h7v8h-7zM5 5.500h4M5 7.500h4" fill="none" stroke="#555" /></svg>
      </div>
      <div className="w-[38px] flex items-center justify-center">
        <svg width="14" height="14" viewBox="0 0 14 14"><path d="M.5.500h13v13H.5zM4.500.5v7h5v-7" fill="none" stroke="#555" /></svg>
      </div>
      <div className="ml-[5px] flex items-center">
        <div className="w-[6px] h-[2px] bg-[#555]" />
        <div className="ml-[4px] w-[50px] h-px bg-[#a0a0a0]" />
        <div className="w-[6px] h-[12px] bg-[#666]" />
        <div className="w-[44px] h-px bg-[#a0a0a0]" />
        <svg width="8" height="8" viewBox="0 0 8 8" className="ml-[3px]"><path d="M4 0v8M0 4h8" stroke="#555" strokeWidth="1.500" /></svg>
      </div>
      <div className="ml-[12px] w-[48px] flex items-center tracking-[-0.2px]">120 %</div>
    </div>
  );
}

export default function App() {
  return (
    <div className="w-[1199px] h-[799px] overflow-hidden border border-[#777] bg-[#e6e6e6] flex flex-col font-['Open_Sans',sans-serif]">
      <TitleBar />
      <TabRow />
      <Ribbon />
      <div className="h-[11px] shrink-0" />
      <FormulaBar />
      <div className="h-[10px] shrink-0" />
      <div className="h-[540px] shrink-0 flex">
        <Sheet />
        <ScrollBar />
      </div>
      <SheetTabs />
      <StatusBar />
    </div>
  );
}
